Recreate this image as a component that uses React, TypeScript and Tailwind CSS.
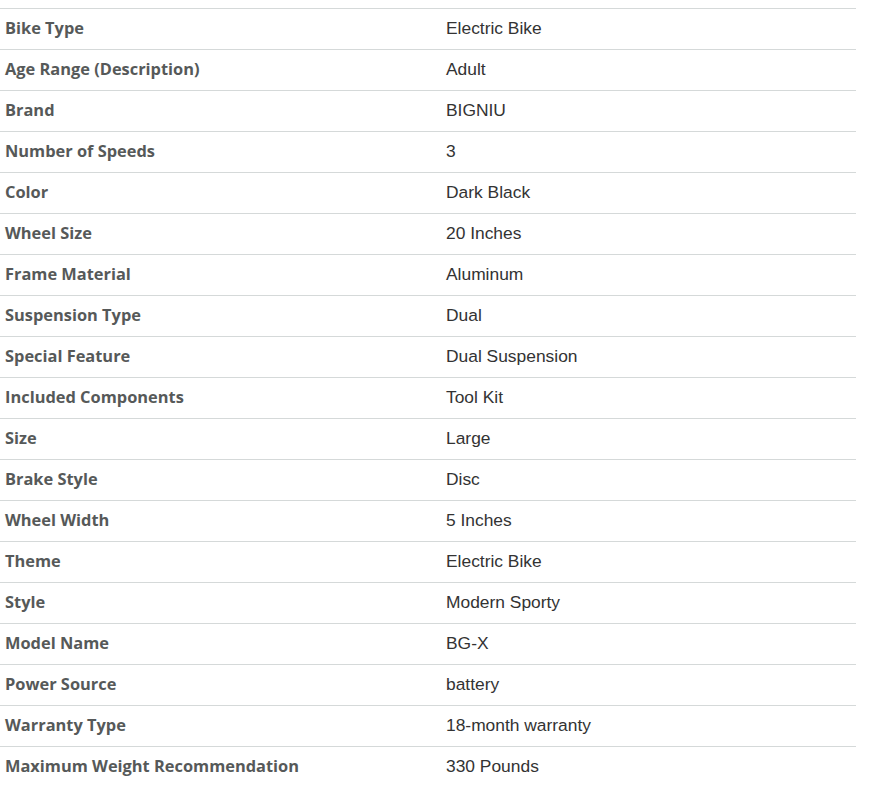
const specs: [string, string][] = [
  ['Bike Type', 'Electric Bike'],
  ['Age Range (Description)', 'Adult'],
  ['Brand', 'BIGNIU'],
  ['Number of Speeds', '3'],
  ['Color', 'Dark Black'],
  ['Wheel Size', '20 Inches'],
  ['Frame Material', 'Aluminum'],
  ['Suspension Type', 'Dual'],
  ['Special Feature', 'Dual Suspension'],
  ['Included Components', 'Tool Kit'],
  ['Size', 'Large'],
  ['Brake Style', 'Disc'],
  ['Wheel Width', '5 Inches'],
  ['Theme', 'Electric Bike'],
  ['Style', 'Modern Sporty'],
  ['Model Name', 'BG-X'],
  ['Power Source', 'battery'],
  ['Warranty Type', '18-month warranty'],
  ['Maximum Weight Recommendation', '330 Pounds'],
];

export default function App() {
  return (
    <div className="bg-white w-[892px] h-[787px] pt-[8px] overflow-hidden">
      <div className="w-[856px]">
        {specs.map(([label, value]) => (
          <div key={label} className="grid grid-cols-[446px_1fr] h-[41px] pb-[2px] border-t border-[#d5d9d9] items-center">
            <span className="pl-[5px] text-[16.4px] font-bold text-[#565959] font-['Open_Sans',sans-serif]">{label}</span>
            <span className="text-[17.4px] text-[#333333] font-['Liberation_Sans',Arial,sans-serif]">{value}</span>
          </div>
        ))}
      </div>
    </div>
  );
}
